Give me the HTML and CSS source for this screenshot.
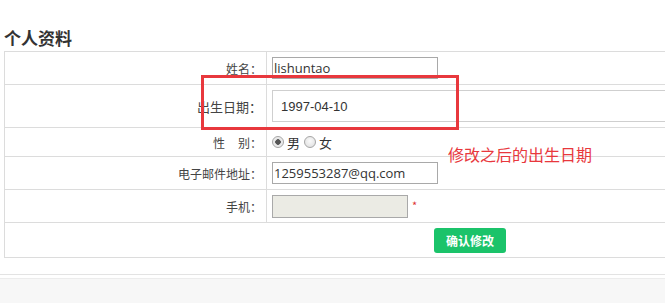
FILE: index.html
```html
<!DOCTYPE html>
<html lang="zh-CN">
<head>
<meta charset="utf-8">
<title>个人资料</title>
<link rel="stylesheet" href="styles.css">
</head>
<body>
<div class="page">
  <h2 class="title">个人资料</h2>
  <div class="form">
    <div class="row r1">
      <div class="label">姓名：</div>
      <div class="field"><input class="txt" type="text" value="lishuntao"></div>
    </div>
    <div class="row r2">
      <div class="label big">出生日期：</div>
      <div class="field"><input class="date" type="text" value="1997-04-10"></div>
    </div>
    <div class="row r3">
      <div class="label">性<span class="gap"></span>别：</div>
      <div class="field radios">
        <input class="radio" type="radio" name="sex" checked><span class="rlabel">男</span>
        <input class="radio" type="radio" name="sex"><span class="rlabel">女</span>
      </div>
    </div>
    <div class="row r4">
      <div class="label">电子邮件地址：</div>
      <div class="field"><input class="txt" type="text" value="1259553287@qq.com"></div>
    </div>
    <div class="row r5">
      <div class="label">手机：</div>
      <div class="field"><input class="phone" type="text" disabled><span class="req">*</span></div>
    </div>
    <div class="row r6">
      <div class="submit"><button class="btn" type="button">确认修改</button></div>
    </div>
  </div>
  <div class="footer"><div class="footer-inner"></div></div>

  <div class="highlight"></div>
  <div class="note">修改之后的出生日期</div>
</div>
</body>
</html>
```

FILE: styles.css
```css
html, body {
  margin: 0;
  padding: 0;
  overflow: hidden;
  background: #fff;
}
.page {
  position: relative;
  width: 665px;
  height: 303px;
  overflow: hidden;
  font-family: "Noto Sans CJK SC", "Liberation Sans", sans-serif;
  color: #444;
}
.title {
  margin: 28px 0 3px 4px;
  font-size: 17px;
  line-height: 20px;
  font-weight: bold;
  color: #333;
}
.form {
  margin-left: 4px;
  width: 720px;
  border: 1px solid #dcdcdc;
}
.row {
  display: flex;
  border-bottom: 1px solid #dcdcdc;
}
.row:last-child {
  border-bottom: none;
}
.r1, .r4, .r5 { height: 32px; }
.r2 { height: 42px; }
.r3 { height: 28px; }
.r6 { height: 34px; }
.label {
  box-sizing: border-box;
  width: 262px;
  flex: none;
  border-right: 1px solid #dcdcdc;
  display: flex;
  align-items: center;
  justify-content: flex-end;
  padding-right: 4px;
  font-size: 12px;
  color: #444;
}
.label.big {
  font-size: 13px;
}
.gap {
  display: inline-block;
  width: 13px;
}
.field {
  display: flex;
  align-items: center;
  padding-left: 5px;
}
.txt {
  box-sizing: border-box;
  width: 166px;
  height: 22px;
  margin: 0;
  padding: 0 1px;
  border: 1px solid #a9a9a9;
  font-family: "Open Sans", "Liberation Sans", sans-serif;
  font-size: 13px;
  color: #333;
  outline: none;
}
.date {
  box-sizing: border-box;
  width: 420px;
  height: 32px;
  margin: 0;
  padding: 0 8px;
  border: 1px solid #cfcfcf;
  font-family: "Liberation Sans", sans-serif;
  font-size: 13px;
  color: #333;
  outline: none;
}
.phone {
  box-sizing: border-box;
  width: 136px;
  height: 23px;
  margin: 0;
  border: 1px solid #a9a9a9;
  background: #ebebe4;
}
.req {
  margin-left: 4px;
  color: #d33;
  font-size: 11px;
  line-height: 1;
  margin-top: -2px;
}
.radios {
  font-size: 13px;
  color: #333;
}
.radio {
  appearance: none;
  -webkit-appearance: none;
  box-sizing: border-box;
  width: 12px;
  height: 12px;
  margin: 0;
  border-radius: 50%;
  border: 1px solid #a5a5a5;
  background: radial-gradient(circle at 50% 40%, #fafafa 0, #dcdcdc 100%);
}
.radio:checked {
  background: radial-gradient(circle, #555 0, #555 2.5px, #e6e6e6 3px, #f5f5f5 100%);
}
.rlabel {
  margin: 0 4px 0 3px;
  line-height: 1;
}
.submit {
  display: flex;
  align-items: center;
  padding-left: 429px;
}
.btn {
  width: 72px;
  height: 25px;
  margin: 0;
  border: none;
  border-radius: 3px;
  background: #1bc36a;
  color: #fff;
  font-family: "Noto Sans CJK SC", sans-serif;
  font-size: 12px;
  font-weight: bold;
  padding: 2px 0 0;
  line-height: 1;
}
.footer {
  margin-top: 16px;
  border-top: 1px solid #e3e3e3;
  padding-top: 3px;
  background: #fff;
}
.footer-inner {
  border-top: 1px solid #ececec;
  background: #f7f7f7;
  height: 40px;
}
.highlight {
  position: absolute;
  left: 201px;
  top: 75px;
  width: 258px;
  height: 55px;
  box-sizing: border-box;
  border: 3px solid #e8383d;
}
.note {
  position: absolute;
  left: 448px;
  top: 144px;
  font-size: 16px;
  line-height: 20px;
  color: #e8383d;
  white-space: nowrap;
}
```
